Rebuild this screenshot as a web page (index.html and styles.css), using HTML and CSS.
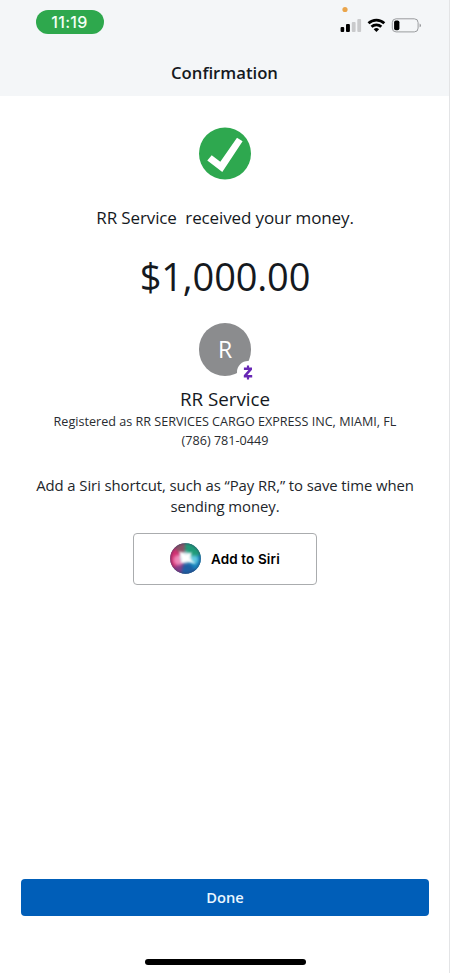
FILE: index.html
```html
<!DOCTYPE html>
<html lang="en">
<head>
<meta charset="utf-8">
<meta name="viewport" content="width=device-width, initial-scale=1">
<title>Confirmation</title>
<link rel="stylesheet" href="styles.css">
</head>
<body>
<div class="screen">
  <header class="header">
    <div class="status-bar">
      <span class="time">11:19</span>
      <svg class="status-icons" width="84" height="30" viewBox="0 0 84 30">
        <circle cx="7" cy="4.5" r="2.6" fill="#eaa54b"/>
        <rect x="2.6" y="22" width="3.6" height="5" rx="1"/>
        <rect x="8" y="19" width="3.9" height="8" rx="1"/>
        <rect x="13.8" y="17" width="3.8" height="10" rx="1" fill="#c9cacc"/>
        <rect x="19.3" y="14" width="3.8" height="13" rx="1" fill="#c9cacc"/>
        <g fill="none" stroke="#000" stroke-width="2.7">
          <path d="M30.5 18.3a11.4 11.4 0 0 1 15.8 0"/>
          <path d="M33.5 21.8a7 7 0 0 1 9.8 0"/>
        </g>
        <path d="M35.7 24.2a4.3 4.3 0 0 1 5.4 0L38.4 27Z"/>
        <rect x="54.3" y="13.8" width="25.8" height="13.1" rx="3.8" fill="none" stroke="#9a9c9f"/>
        <rect x="56.1" y="15.5" width="5.3" height="9.8" rx="1.8"/>
        <path d="M81.6 18.5q1.3 .4 1.3 1.9t-1.3 1.9Z" fill="#8d8f91"/>
      </svg>
    </div>
    <h1 class="title">Confirmation</h1>
  </header>
  <main class="content">
    <svg class="success" width="52" height="53" viewBox="0 0 52 53">
      <g transform="translate(0 .5)">
        <circle cx="26" cy="26" r="26" fill="#2ea84f"/>
        <path d="M8.3 33 12.7 27.8 21.3 34.2 38 10.2 43.6 13.7 23.3 44.5Z" fill="#fff"/>
      </g>
    </svg>
    <p class="message"><span>RR Service&nbsp; received your money.</span></p>
    <p class="amount"><span>$1,000.00</span></p>
    <div class="avatar">
      <span class="initial">R</span>
      <svg class="badge" width="22" height="22" viewBox="0 0 22 22">
        <circle cx="11" cy="11" r="11" fill="#fff"/>
        <path d="M6.9 6.6H15V8.8L10.4 14.1H15.2V16.4H6.8V14.2L11.4 8.9H6.9ZM9.9 4.4H12.1V7H9.9ZM9.9 16H12.1V18.6H9.9Z" fill="#6727b5"/>
      </svg>
    </div>
    <h2 class="name"><span>RR Service</span></h2>
    <p class="registered"><span>Registered as RR SERVICES CARGO EXPRESS INC, MIAMI, FL</span></p>
    <p class="phone"><span>(786) 781-0449</span></p>
    <p class="hint"><span>Add a Siri shortcut, such as “Pay RR,” to save time when</span><br><span>sending money.</span></p>
    <button class="siri">
      <svg class="orb" width="31" height="31" viewBox="0 0 31 31">
        <defs>
          <clipPath id="disc"><circle cx="15.5" cy="15.5" r="15.3"/></clipPath>
          <filter id="soft" x="-50%" y="-50%" width="200%" height="200%" color-interpolation-filters="sRGB"><feGaussianBlur stdDeviation="1.8"/></filter>
          <filter id="glow" x="-50%" y="-50%" width="200%" height="200%" color-interpolation-filters="sRGB"><feGaussianBlur stdDeviation="1.3"/></filter>
          <radialGradient id="rim"><stop offset=".82" stop-color="#333058" stop-opacity="0"/><stop offset="1" stop-color="#333058" stop-opacity=".4"/></radialGradient>
        </defs>
        <g clip-path="url(#disc)">
          <rect width="31" height="31" fill="#3d7ba0"/>
          <g filter="url(#soft)">
            <path d="M15 15 10-4H-4V28L4 27Z" fill="#cf2f70"/>
            <path d="M15 14 4 5 9-3 17-3Z" fill="#875366"/>
            <path d="M15 15 15-4H35V13Z" fill="#1f9a78"/>
            <path d="M16 15 35 11V28L26 31Z" fill="#1985bd"/>
            <path d="M15 16 28 30 18 35 5 32Z" fill="#1d5fa4"/>
            <path d="M15 16 10 34-1 29Z" fill="#843c88"/>
            <circle cx="8.5" cy="17" r="5.2" fill="#ee86b7"/>
            <circle cx="24" cy="16.5" r="4" fill="#62c9df"/>
            <circle cx="15.5" cy="14.5" r="5.8" fill="#d2e3ec"/>
          </g>
          <path d="M9 8 16 12 22 9 19 15 26 21 17 18 11 20 12 16Z" fill="#fff" filter="url(#glow)"/>
          <circle cx="15.5" cy="15.5" r="15.5" fill="url(#rim)"/>
        </g>
      </svg>
      <span class="siri-label">Add to Siri</span>
    </button>
  </main>
  <footer class="footer">
    <button class="done">Done</button>
    <div class="home-bar"></div>
  </footer>
</div>
</body>
</html>
```
FILE: styles.css
```css
* { box-sizing: border-box; }
body { margin: 0; background: #fff; color: #15191e; font-family: "Open Sans", sans-serif; }
h1, h2, p { margin: 0; font-weight: 400; white-space: nowrap; }
button { font: inherit; padding: 0; }
.screen { width: 450px; height: 973px; display: flex; flex-direction: column; background: linear-gradient(#e3e4e6, #e3e4e6) right / 1px 100% no-repeat; overflow: hidden; }
.header { height: 96px; margin-right: 1px; background: #f4f6f8; text-align: center; }
.status-bar { height: 56px; padding: 5px 27px 0 35.5px; display: flex; justify-content: space-between; }
.time { width: 68px; height: 24px; margin-top: 4.5px; border-radius: 12px; background: #2ea84d; color: #f3fff5; font: 500 16px/25px Inter, sans-serif; letter-spacing: .3px; }
.title { font-size: 16.7px; line-height: 34px; font-weight: 600; }
.content { flex: 1; display: flex; flex-direction: column; align-items: center; text-align: center; padding-top: 31px; }
.success { display: block; flex: none; }
.message { margin-top: 22px; font-size: 17px; line-height: 32px; letter-spacing: -.12px; }
.amount { margin-top: 16px; font-size: 38px; line-height: 52px; letter-spacing: -.15px; }
.avatar { position: relative; flex: none; width: 52.5px; height: 52.5px; margin-top: 21px; border-radius: 50%; background: #8b8c8e; color: #fff; }
.initial { font-size: 23px; line-height: 53px; }
.badge { position: absolute; left: 38px; top: 38px; }
.name { margin-top: 10.5px; font-size: 18.8px; line-height: 26px; }
.registered, .phone { font-size: 12.6px; line-height: 19px; color: #292c30; }
.hint { margin-top: 25px; font-size: 14.9px; line-height: 20.5px; letter-spacing: -.08px; color: #22262b; }
.siri { display: flex; align-items: center; flex: none; width: 184px; height: 52px; margin-top: 16.6px; padding-left: 36px; border: 1px solid #aaacae; border-radius: 4px; background: #fff; color: #000; }
.orb { display: block; margin-right: 10px; }
.siri-label { font: 600 13.5px/20px Inter, sans-serif; letter-spacing: .12px; }
.footer { height: 94.5px; display: flex; flex-direction: column; align-items: center; }
.done { width: 408px; height: 37.5px; border: 0; border-radius: 4px; background: #005eb8; color: #e9f6ff; font-size: 14.7px; font-weight: 600; }
.home-bar { width: 161px; height: 5.5px; margin-top: 43px; border-radius: 3px; background: #000; }
```
